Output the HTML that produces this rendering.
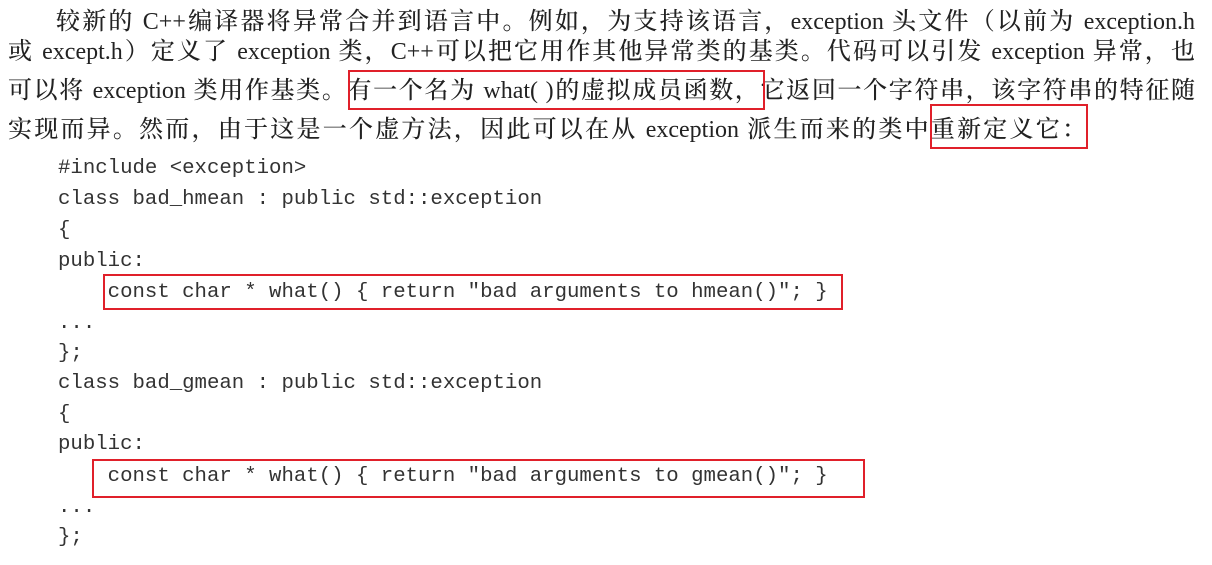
<!DOCTYPE html>
<html><head><meta charset="utf-8"><style>
body{margin:0;width:1212px;height:565px;background:#fff;position:relative;overflow:hidden;color:#222}
.t{position:absolute;left:8px;width:1187px;font-family:"Liberation Serif","Noto Serif CJK SC",serif;font-size:24px;line-height:30px;text-align:justify;text-align-last:justify;white-space:nowrap;font-weight:500}
.c{position:absolute;left:58px;font-family:"Liberation Mono",monospace;font-size:20.7px;line-height:30px;white-space:pre;color:#333}
.b{position:absolute;border:2.5px solid #e0202a;box-sizing:border-box}
</style></head><body>
<div class="t" style="top:7px;left:56px;width:1139px">较新的 C++编译器将异常合并到语言中。例如，为支持该语言，exception 头文件（以前为 exception.h</div>
<div class="t" style="top:37px">或 except.h）定义了 exception 类，C++可以把它用作其他异常类的基类。代码可以引发 exception 异常，也</div>
<div class="t" style="top:76px">可以将 exception 类用作基类。有一个名为 what( )的虚拟成员函数，它返回一个字符串，该字符串的特征随</div>
<div class="t" style="top:115px;width:1078px">实现而异。然而，由于这是一个虚方法，因此可以在从 exception 派生而来的类中重新定义它：</div>
<div class="c" style="top:154px">#include &lt;exception&gt;</div>
<div class="c" style="top:185px">class bad_hmean : public std::exception</div>
<div class="c" style="top:216px">{</div>
<div class="c" style="top:247px">public:</div>
<div class="c" style="top:278px">    const char * what() { return "bad arguments to hmean()"; }</div>
<div class="c" style="top:309px">...</div>
<div class="c" style="top:339px">};</div>
<div class="c" style="top:369px">class bad_gmean : public std::exception</div>
<div class="c" style="top:400px">{</div>
<div class="c" style="top:430px">public:</div>
<div class="c" style="top:462px">    const char * what() { return "bad arguments to gmean()"; }</div>
<div class="c" style="top:493px">...</div>
<div class="c" style="top:523px">};</div>
<div class="b" style="left:348px;top:70px;width:417px;height:40px"></div>
<div class="b" style="left:930px;top:104px;width:158px;height:45px"></div>
<div class="b" style="left:103px;top:274px;width:740px;height:36px"></div>
<div class="b" style="left:92px;top:459px;width:773px;height:39px"></div>
</body></html>
